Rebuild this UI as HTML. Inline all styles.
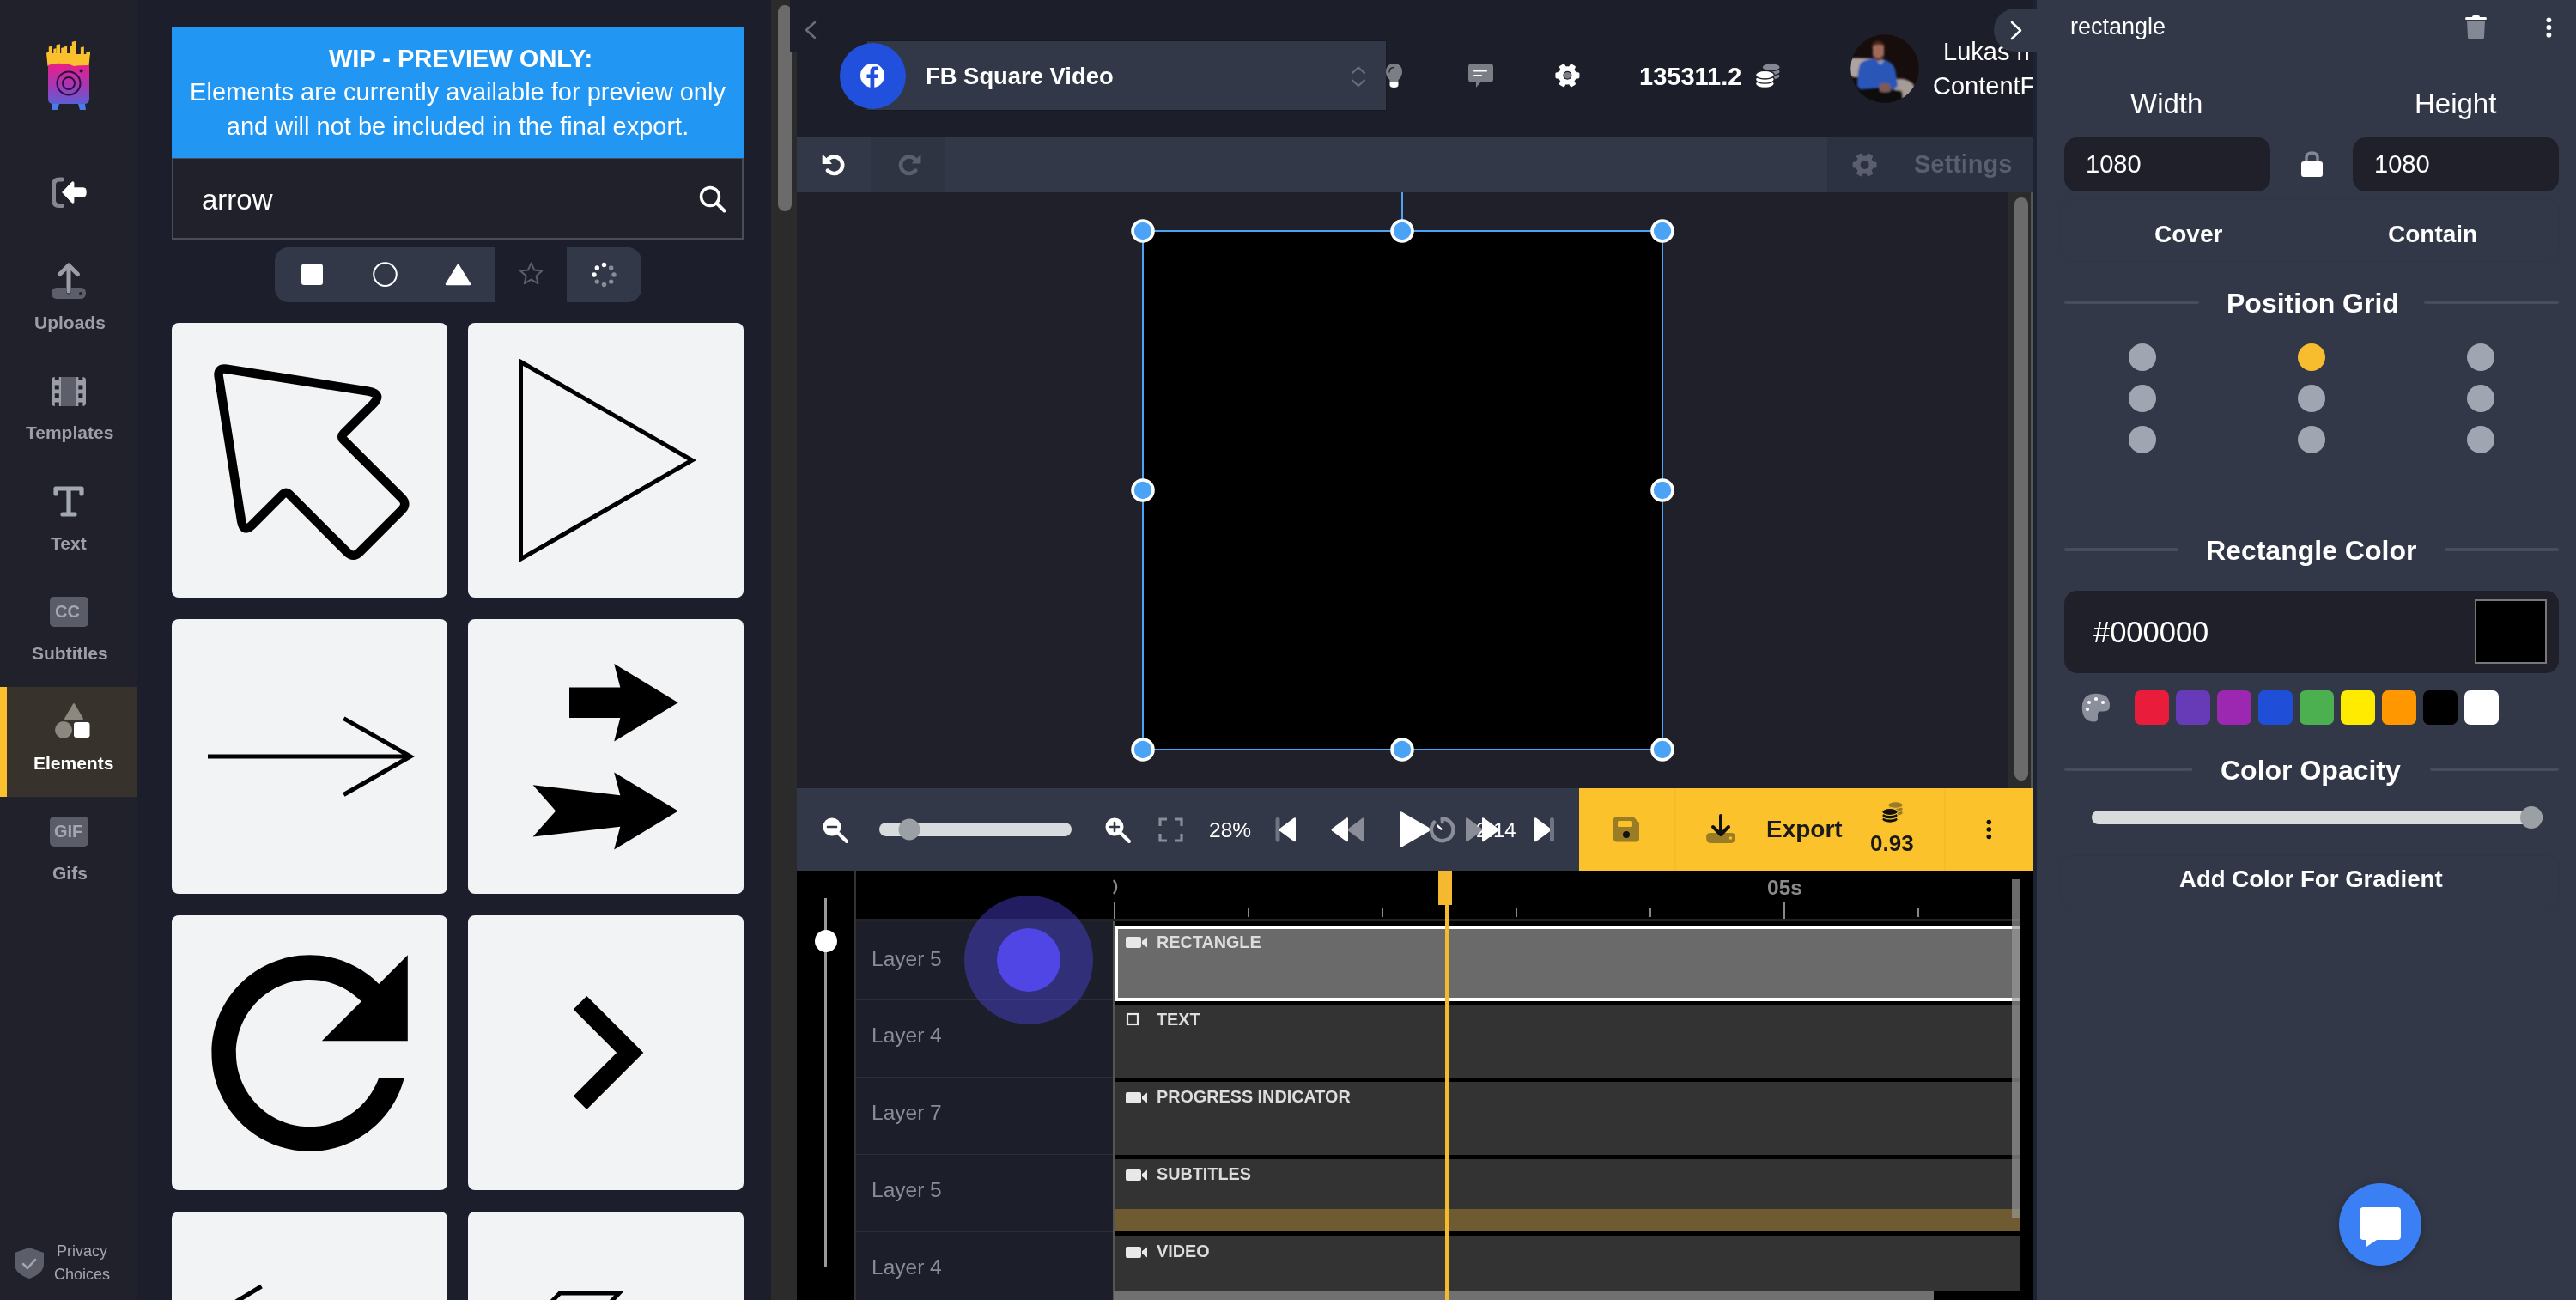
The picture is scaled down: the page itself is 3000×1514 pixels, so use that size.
<!DOCTYPE html>
<html><head><meta charset="utf-8">
<style>
*{margin:0;padding:0;box-sizing:border-box}
html,body{width:3000px;height:1514px;overflow:hidden;background:#1f2029;font-family:"Liberation Sans",sans-serif}
.a{position:absolute}
.t{position:absolute;line-height:1;white-space:nowrap;will-change:transform}
svg{position:absolute;overflow:visible}
</style></head><body>

<!-- ============ SIDEBAR ============ -->
<div class="a" style="left:0;top:0;width:160px;height:1514px;background:#20212b"></div>
<!-- logo -->
<svg style="left:0;top:0" width="160" height="140" viewBox="0 0 160 140">
  <defs><linearGradient id="lg1" x1="0" y1="0" x2="0" y2="1">
    <stop offset="0" stop-color="#ec1e86"/><stop offset="0.55" stop-color="#a537b5"/><stop offset="1" stop-color="#5c5fd6"/></linearGradient></defs>
  <g fill="#fbc02d"><path d="M54,61.5 L60,60 L60,62 L89,62 L89,63 L100.6,63 L100.6,60 L105,61 L103.5,77 L55.5,77 Z"/><path d="M56.8,54.5 L60.4,53.5 L60.4,64 L56.8,64 Z"/><path d="M62.4,57.0 L65.6,56.0 L65.6,64 L62.4,64 Z"/><path d="M65.6,52.3 L70.0,51.3 L70.0,64 L65.6,64 Z"/><path d="M71.2,56.0 L74.5,55.0 L74.5,64 L71.2,64 Z"/><path d="M74.3,54.5 L78.1,53.5 L78.1,64 L74.3,64 Z"/><path d="M81.4,54.1 L84.0,53.1 L84.0,64 L81.4,64 Z"/><path d="M83.8,48.7 L88.2,47.7 L88.2,64 L83.8,64 Z"/><path d="M93.9,55.2 L97.8,54.2 L97.8,64 L93.9,64 Z"/><path d="M100.6,60.7 L105.0,59.7 L105.0,64 L100.6,64 Z"/></g>
  <path d="M56,76 Q64,73 72,74 Q80,74 86,77 Q92,76 104,76 L104,115 Q104,121 98,121 L62,121 Q56,121 56,115 Z" fill="url(#lg1)"/>
  <path d="M60,121 L69,121 L67,128 L60,128 Z M91,121 L99,121 L100,128 L93,128 Z" fill="#4a7be6"/>
  <circle cx="80" cy="97" r="13.5" fill="none" stroke="#2a1040" stroke-width="2"/>
  <circle cx="80" cy="97" r="7" fill="none" stroke="#2a1040" stroke-width="2"/>
  <circle cx="94.6" cy="82.4" r="2" fill="#2a1040"/>
</svg>
<!-- login icon -->
<svg style="left:0;top:0" width="160" height="260">
  <path d="M72.5,209 L69,209 Q62.5,209 62.5,215.5 L62.5,233 Q62.5,239.5 69,239.5 L72.5,239.5" fill="none" stroke="#85878f" stroke-width="5" stroke-linecap="round"/>
  <path d="M72.5,224 L83.5,212.3 Q86,210.5 86,213.5 L86,218.7 L97,218.7 Q100.2,218.7 100.2,222 L100.2,225.8 Q100.2,229 97,229 L86,229 L86,234.5 Q86,237.5 83.5,235.7 Z" fill="#fff" stroke="#fff" stroke-width="0.8" stroke-linejoin="round"/>
</svg>
<!-- uploads icon -->
<svg style="left:0;top:0" width="160" height="360">
  <path d="M80,339 L80,310 M69.5,319.5 L80,309 L90.5,319.5" fill="none" stroke="#9a9ca6" stroke-width="5" stroke-linecap="round" stroke-linejoin="round"/>
  <path d="M60,341 Q60,335 66,335 L77.5,335 L77.5,340 Q77.5,342.5 80,342.5 Q82.5,342.5 82.5,340 L82.5,335 L94,335 Q100,335 100,341 Q100,348 94,348 L66,348 Q60,348 60,341 Z" fill="#5c5e6a"/>
  <circle cx="94" cy="342" r="2" fill="#20212b"/>
</svg>
<div class="t" style="left:40px;top:365px;font-size:21px;font-weight:700;color:#9d9fa8">Uploads</div>
<!-- templates icon -->
<svg style="left:0;top:0" width="160" height="480">
  <rect x="60" y="439" width="40" height="34" rx="4" fill="#9a9ca6"/>
  <rect x="71" y="439" width="18" height="34" fill="#5c5e6a"/>
  <rect x="63.8" y="439" width="5" height="4" fill="#20212b"/><rect x="63.8" y="448.5" width="5" height="5" fill="#20212b"/><rect x="63.8" y="458.3" width="5" height="5" fill="#20212b"/><rect x="63.8" y="468.5" width="5" height="4.5" fill="#20212b"/>
  <rect x="91.4" y="439" width="5" height="4" fill="#20212b"/><rect x="91.4" y="448.5" width="5" height="5" fill="#20212b"/><rect x="91.4" y="458.3" width="5" height="5" fill="#20212b"/><rect x="91.4" y="468.5" width="5" height="4.5" fill="#20212b"/>
</svg>
<div class="t" style="left:30px;top:493px;font-size:21px;font-weight:700;color:#9d9fa8">Templates</div>
<!-- text icon -->
<svg style="left:0;top:0" width="160" height="620">
  <path d="M65,575 L65,569 L95,569 L95,575 M80,569 L80,599 M73,599 L87,599" fill="none" stroke="#a3a7b2" stroke-width="5.2" stroke-linecap="round" stroke-linejoin="round"/>
</svg>
<div class="t" style="left:59px;top:622px;font-size:21px;font-weight:700;color:#9d9fa8">Text</div>
<!-- CC -->
<div class="a" style="left:57.5px;top:694.5px;width:45px;height:35px;border-radius:5px;background:#5a5c68"></div>
<div class="t" style="left:64px;top:702px;font-size:20px;font-weight:700;color:#a5a7b0">CC</div>
<div class="t" style="left:37px;top:750px;font-size:21px;font-weight:700;color:#9d9fa8">Subtitles</div>
<!-- Elements (active) -->
<div class="a" style="left:0;top:800px;width:160px;height:128px;background:#37322b"></div>
<div class="a" style="left:0;top:800px;width:8px;height:128px;background:#fbc02d"></div>
<svg style="left:0;top:0" width="160" height="900">
  <path d="M86,820 L96,837 L76,837 Z" fill="#8c8880" stroke="#8c8880" stroke-width="2" stroke-linejoin="round"/>
  <circle cx="74" cy="850" r="10" fill="#8c8880"/>
  <rect x="86" y="841" width="18.5" height="18" rx="3" fill="#fff"/>
</svg>
<div class="t" style="left:39px;top:878px;font-size:21px;font-weight:700;color:#fff">Elements</div>
<!-- GIF -->
<div class="a" style="left:57.5px;top:950.5px;width:45px;height:35px;border-radius:5px;background:#5a5c68"></div>
<div class="t" style="left:63px;top:958px;font-size:20px;font-weight:700;color:#a5a7b0">GIF</div>
<div class="t" style="left:61px;top:1006px;font-size:21px;font-weight:700;color:#9d9fa8">Gifs</div>
<!-- privacy -->
<svg style="left:0;top:0" width="160" height="1514">
  <path d="M34,1453 L51,1459 L51,1472 Q51,1483 34,1489 Q17,1483 17,1472 L17,1459 Z" fill="#5c5e6a"/>
  <path d="M27,1472 L32,1477 L41,1467" fill="none" stroke="#a5a7b0" stroke-width="2.5" stroke-linecap="round" stroke-linejoin="round"/>
</svg>
<div class="t" style="left:66px;top:1448px;font-size:18px;color:#a5a7b0">Privacy</div>
<div class="t" style="left:63px;top:1475px;font-size:18px;color:#a5a7b0">Choices</div>

<!-- ============ LEFT PANEL ============ -->
<div class="a" style="left:160px;top:0;width:738px;height:1514px;background:#1c1f2b"></div>
<div class="a" style="left:200px;top:32px;width:666px;height:152px;background:#2196f3"></div>
<div class="t" style="left:383px;top:54px;font-size:29px;font-weight:700;color:#fff">WIP - PREVIEW ONLY:</div>
<div class="t" style="left:200px;width:666px;text-align:center;top:93px;font-size:29px;color:#fff">Elements are currently available for preview only</div>
<div class="t" style="left:200px;width:666px;text-align:center;top:133px;font-size:29px;color:#fff">and will not be included in the final export.</div>
<!-- search -->
<div class="a" style="left:200px;top:184px;width:666px;height:95px;background:#20212a;border:2px solid #4a4d57;border-top-width:1px"></div>
<div class="t" style="left:235px;top:216px;font-size:33px;color:#fff">arrow</div>
<svg style="left:0;top:0" width="900" height="300">
  <circle cx="827" cy="229" r="10.5" fill="none" stroke="#fff" stroke-width="3.5"/>
  <path d="M835,237 L843.5,245.5" stroke="#fff" stroke-width="4" stroke-linecap="round"/>
</svg>
<!-- shape toolbar -->
<div class="a" style="left:320px;top:288px;width:257px;height:63.5px;background:#323847;border-radius:16px 0 0 16px"></div>
<div class="a" style="left:660px;top:288px;width:86.5px;height:63.5px;background:#323847;border-radius:0 16px 16px 0"></div>
<svg style="left:0;top:0" width="900" height="400">
  <rect x="351" y="307.5" width="25" height="24.5" rx="3" fill="#fff"/>
  <circle cx="448.5" cy="319.6" r="13.3" fill="none" stroke="#fff" stroke-width="2"/>
  <path d="M533.5,309 L547,331 L520,331 Z" fill="#fff" stroke="#fff" stroke-width="2.5" stroke-linejoin="round"/>
  <path d="M618.6,306.5 L622.3,314.6 L631.2,315.4 L624.5,321.4 L626.5,330.2 L618.6,325.6 L610.8,330.2 L612.8,321.4 L606,315.4 L614.9,314.6 Z" fill="none" stroke="#5a5e6a" stroke-width="2" stroke-linejoin="round"/>
  <circle cx="703.5" cy="308.5" r="2.7" fill="#fff"/>
  <circle cx="711.7" cy="311.9" r="2.7" fill="#8a8d97"/>
  <circle cx="715" cy="320" r="2.7" fill="#8a8d97"/>
  <circle cx="711.7" cy="328.1" r="2.7" fill="#8a8d97"/>
  <circle cx="703.5" cy="331.5" r="2.7" fill="#8a8d97"/>
  <circle cx="695.3" cy="328.1" r="2.7" fill="#8a8d97"/>
  <circle cx="692" cy="320" r="2.7" fill="#fff"/>
  <circle cx="695.3" cy="311.9" r="2.7" fill="#fff"/>
</svg>
<!-- cards -->
<div class="a" style="left:200px;top:376px;width:321px;height:320px;background:#f2f3f5;border-radius:8px"></div>
<div class="a" style="left:545px;top:376px;width:321px;height:320px;background:#f2f3f5;border-radius:8px"></div>
<div class="a" style="left:200px;top:721px;width:321px;height:320px;background:#f2f3f5;border-radius:8px"></div>
<div class="a" style="left:545px;top:721px;width:321px;height:320px;background:#f2f3f5;border-radius:8px"></div>
<div class="a" style="left:200px;top:1066px;width:321px;height:320px;background:#f2f3f5;border-radius:8px"></div>
<div class="a" style="left:545px;top:1066px;width:321px;height:320px;background:#f2f3f5;border-radius:8px"></div>
<div class="a" style="left:200px;top:1411px;width:321px;height:320px;background:#f2f3f5;border-radius:8px"></div>
<div class="a" style="left:545px;top:1411px;width:321px;height:320px;background:#f2f3f5;border-radius:8px"></div>
<svg style="left:0;top:0" width="900" height="1514">
  <path d="M263.9,429.8 L428.8,455.6 Q446.6,458.4 433.9,471.1 L399.9,505.1 Q396.4,508.6 399.9,512.2 L467.8,580.0 Q474.8,587.1 467.8,594.1 L418.6,643.3 Q411.6,650.4 404.5,643.3 L336.6,575.4 Q333.1,571.9 329.6,575.4 L294.0,611.0 Q283.4,621.6 281.1,606.8 L254.8,438.9 Q253.1,428.1 263.9,429.8 Z" fill="none" stroke="#000" stroke-width="10.5" stroke-linejoin="round"/>
  <path d="M606.5,421.5 L806,536 L606.5,651 Z" fill="none" stroke="#000" stroke-width="5"/>
  <path d="M242,881 L478,881 M400.3,836.6 L478,881 L400.3,925.5" fill="none" stroke="#000" stroke-width="5"/>
  <path d="M663,800.5 L722.3,800.5 L715.2,773 L789.8,818.3 L715.2,863.6 L722.3,836 L663,836 Z" fill="#000"/>
  <path d="M620.6,914.3 L722.3,926.3 L715.2,899.4 L789.8,944.4 L715.2,989.6 L722.3,962.7 L620.6,974.4 L647.2,944.4 Z" fill="#000"/>
  <g transform="translate(189.2,1055.2) scale(14.28)"><path d="M17.65 6.35C16.2 4.9 14.21 4 12 4c-4.42 0-7.99 3.58-7.99 8s3.57 8 7.99 8c3.730 0 6.84-2.55 7.73-6h-2.08c-.82 2.33-3.04 4-5.65 4-3.310 0-6-2.69-6-6s2.690-6 6-6c1.66 0 3.14.69 4.22 1.78L13 11h7V4l-2.35 2.35z" fill="#000"/></g>
  <g transform="translate(573.3,1094) scale(11)"><path d="M10 6L8.59 7.41 13.17 12l-4.58 4.59L10 18l6-6z" fill="#000"/></g>
  <path d="M304.5,1498 L265,1522" fill="none" stroke="#000" stroke-width="5"/>
  <path d="M600,1560 L652,1506 L721,1506 L670,1560" fill="none" stroke="#000" stroke-width="5"/>
</svg>
<!-- left panel scrollbar -->
<div class="a" style="left:898px;top:0;width:30px;height:1514px;background:#2b2b2b"></div>
<div class="a" style="left:906px;top:6px;width:16px;height:240px;background:#6b6b6b;border-radius:8px"></div>

<!-- ============ MAIN ============ -->
<div class="a" style="left:928px;top:0;width:1440px;height:160px;background:#1c1f2a"></div>
<div class="a" style="left:920px;top:0;width:8px;height:60px;background:#1c1f2a"></div>
<svg style="left:0;top:0" width="3000" height="160">
  <path d="M949,26 L939,35 L949,44" fill="none" stroke="#6b6e78" stroke-width="2.5" stroke-linecap="round" stroke-linejoin="round"/>
</svg>
<!-- FB bar -->
<div class="a" style="left:1010px;top:47px;width:605px;height:82px;background:#323847;border:1px solid #181a22;border-left:none"></div>
<div class="a" style="left:977.5px;top:49.5px;width:77px;height:77px;border-radius:50%;background:#2150dd"></div>
<svg style="left:0;top:0" width="3000" height="160">
  <circle cx="1016" cy="88" r="14" fill="#fff"/>
  <path d="M1013.5,102 L1013.5,91 L1009.5,91 L1009.5,86.5 L1013.5,86.5 L1013.5,83 Q1013.5,77.5 1019,77.5 L1022.5,77.5 L1022.5,81.5 L1020,81.5 Q1018.3,81.5 1018.3,83.3 L1018.3,86.5 L1022.5,86.5 L1021.8,91 L1018.3,91 L1018.3,102 Z" fill="#2150dd"/>
</svg>
<div class="t" style="left:1078px;top:75px;font-size:27.4px;font-weight:700;color:#fff">FB Square Video</div>
<svg style="left:0;top:0" width="3000" height="160">
  <path d="M1575,85 L1582,78.5 L1589,85 M1575,93.5 L1582,100 L1589,93.5" fill="none" stroke="#6b6e78" stroke-width="2.2" stroke-linecap="round" stroke-linejoin="round"/>
  <!-- bulb -->
  <path d="M1623.5,74 Q1633,74 1633,84 Q1633,89 1628.5,93 L1628.5,96 L1618.5,96 L1618.5,93 Q1614,89 1614,84 Q1614,74 1623.5,74 Z" fill="#7c7e86"/>
  <path d="M1618.5,96 L1628.5,96 L1628.5,99 Q1628.5,102 1623.5,102 Q1618.5,102 1618.5,99 Z" fill="#fff"/>
  <path d="M1618,84 Q1618,78.5 1623.5,78.5" fill="none" stroke="#20212b" stroke-width="1.3" stroke-linecap="round"/>
  <!-- chat -->
  <path d="M1714,74 L1735,74 Q1739,74 1739,78 L1739,92 Q1739,96 1735,96 L1724,96 L1719,102 L1719,96 L1714,96 Q1710,96 1710,92 L1710,78 Q1710,74 1714,74 Z" fill="#7c7e86"/>
  <path d="M1717,82.5 L1731,82.5 M1717,88 L1725,88" stroke="#fff" stroke-width="2.2" stroke-linecap="round"/>
  <!-- gear -->
  <g transform="translate(1825.4,87.8)"><circle r="10.6" fill="#fff"/><rect x="-3.6" y="-14" width="7.2" height="7" rx="1.6" fill="#fff" transform="rotate(90)"/><rect x="-3.6" y="-14" width="7.2" height="7" rx="1.6" fill="#fff" transform="rotate(150)"/><rect x="-3.6" y="-14" width="7.2" height="7" rx="1.6" fill="#fff" transform="rotate(210)"/><rect x="-3.6" y="-14" width="7.2" height="7" rx="1.6" fill="#fff" transform="rotate(270)"/><rect x="-3.6" y="-14" width="7.2" height="7" rx="1.6" fill="#fff" transform="rotate(330)"/><rect x="-3.6" y="-14" width="7.2" height="7" rx="1.6" fill="#fff" transform="rotate(390)"/><circle r="5" fill="#1c1f2a"/><circle r="3.8" fill="#7c7e86"/></g>
  <!-- coins -->
  <g stroke="#1c1f2a" stroke-width="1.3">
    <ellipse cx="2062.7" cy="88.6" rx="10.6" ry="4.6" fill="#848791"/>
    <ellipse cx="2062.7" cy="83.4" rx="10.6" ry="4.6" fill="#848791"/>
    <ellipse cx="2062.7" cy="78.2" rx="10.6" ry="4.6" fill="#848791"/>
    <ellipse cx="2055.4" cy="97.6" rx="10.9" ry="4.8" fill="#fff"/>
    <ellipse cx="2055.4" cy="92.4" rx="10.9" ry="4.8" fill="#fff"/>
    <ellipse cx="2055.4" cy="87.2" rx="10.9" ry="4.8" fill="#fff"/>
  </g>
</svg>
<div class="t" style="left:1909px;top:75px;font-size:29px;font-weight:700;color:#fff">135311.2</div>
<!-- avatar -->
<svg style="left:2155px;top:40px" width="80" height="80" viewBox="0 0 80 80">
  <defs><clipPath id="avc"><circle cx="40" cy="40" r="39.8"/></clipPath>
  <filter id="avb" x="-10%" y="-10%" width="120%" height="120%"><feGaussianBlur stdDeviation="0.9"/></filter></defs>
  <g clip-path="url(#avc)">
    <rect width="80" height="80" fill="#180d0d"/>
    <g filter="url(#avb)">
      <path d="M-2,30 Q0,27 6,27.5 L26,28 L22,50 L4,50 Q-2,48 -2,44 Z" fill="#ada4a1"/>
      <path d="M40,56 Q50,51 62,52 Q74,54 76,66 L74,82 L40,82 Z" fill="#a59c98"/>
      <path d="M12,33 Q18,29 27,28 L37,29 Q48,31 52,40 L55,60 L48,66 L34,64 L14,66 L8,60 Q8,40 12,33 Z" fill="#2a56b8"/>
      <path d="M30,30 L35,36 L40,30 Z" fill="#8a95b0"/>
      <path d="M26,14 Q26,10 32,9.5 Q39,10 39,15 L39,24 Q37,31 32,31 Q27,30 26,24 Z" fill="#a06a58"/>
      <path d="M25,16 Q24,8 32,7.5 Q40,8 40,15 L38,13 Q33,11 27,13 Z" fill="#4a261a"/>
      <path d="M27,24 Q32,31 38,24 L38,28 Q33,33 27,28 Z" fill="#5a3a2e"/>
      <path d="M8,64 L34,62 L48,64 L60,66 L62,82 L8,82 Z" fill="#0c0b0c"/>
      <path d="M34,58 Q40,55 46,58 L47,66 Q40,69 34,66 Z" fill="#7d5a52"/>
    </g>
  </g>
</svg>
<div class="a" style="left:2240px;top:0;width:128px;height:160px;overflow:hidden">
  <div class="t" style="left:23px;top:46px;font-size:29px;color:#fff">Lukas m</div>
  <div class="t" style="left:11px;top:86px;font-size:29px;color:#fff">ContentFries</div>
</div>
<div class="a" style="left:2322px;top:10px;width:50px;height:50px;background:#323847;border-radius:25px 0 0 25px"></div>
<svg style="left:0;top:0" width="3000" height="160">
  <path d="M2343,26 L2353,35.5 L2343,45" fill="none" stroke="#fff" stroke-width="2.6" stroke-linecap="round" stroke-linejoin="round"/>
</svg>

<!-- undo bar -->
<div class="a" style="left:928px;top:160px;width:1440px;height:64px;background:#323847"></div>
<div class="a" style="left:1014px;top:160px;width:87px;height:64px;background:#2f3443"></div>
<div class="a" style="left:2128px;top:160px;width:240px;height:64px;background:#2d3242"></div>
<svg style="left:0;top:0" width="3000" height="260">
  <path d="M964.8,185.0 A9.8,9.8 0 1 1 963.9,198.6" fill="none" stroke="#fff" stroke-width="4.6" stroke-linecap="round"/>
  <path d="M958.3,180.8 L958.3,190.5 L968,190.5 Z" fill="#fff" stroke="#fff" stroke-width="1.2" stroke-linejoin="round"/>
  <path d="M1065.4,185.0 A9.8,9.8 0 1 0 1066.3,198.6" fill="none" stroke="#5a5e6e" stroke-width="4.6" stroke-linecap="round"/>
  <path d="M1071.9,181.2 L1071.9,190 L1062.9,190 Z" fill="#5a5e6e" stroke="#5a5e6e" stroke-width="1.2" stroke-linejoin="round"/>
  <g transform="translate(2171.6,192.0)"><circle r="10.6" fill="#5a5e6e"/><rect x="-3.6" y="-14" width="7.2" height="7" rx="1.6" fill="#5a5e6e" transform="rotate(90)"/><rect x="-3.6" y="-14" width="7.2" height="7" rx="1.6" fill="#5a5e6e" transform="rotate(150)"/><rect x="-3.6" y="-14" width="7.2" height="7" rx="1.6" fill="#5a5e6e" transform="rotate(210)"/><rect x="-3.6" y="-14" width="7.2" height="7" rx="1.6" fill="#5a5e6e" transform="rotate(270)"/><rect x="-3.6" y="-14" width="7.2" height="7" rx="1.6" fill="#5a5e6e" transform="rotate(330)"/><rect x="-3.6" y="-14" width="7.2" height="7" rx="1.6" fill="#5a5e6e" transform="rotate(390)"/><circle r="5" fill="#2d3242"/><circle r="3.8" fill="#2d3242"/></g>
</svg>
<div class="t" style="left:2229px;top:177px;font-size:29px;font-weight:700;color:#5a5e6e">Settings</div>

<!-- canvas -->
<div class="a" style="left:928px;top:224px;width:1410px;height:694px;background:#1f2029"></div>
<div class="a" style="left:1632px;top:224px;width:2px;height:45px;background:#4aa3f5"></div>
<div class="a" style="left:1330px;top:268px;width:607px;height:606px;background:#000;border:2px solid #4aa3f5"></div>
<svg style="left:0;top:0" width="3000" height="1000">
  <g fill="#4aa3f5" stroke="#fff" stroke-width="3.6">
    <circle cx="1331" cy="269" r="12"/><circle cx="1633" cy="269" r="12"/><circle cx="1936" cy="269" r="12"/>
    <circle cx="1331" cy="571" r="12"/><circle cx="1936" cy="571" r="12"/>
    <circle cx="1331" cy="873" r="12"/><circle cx="1633" cy="873" r="12"/><circle cx="1936" cy="873" r="12"/>
  </g>
</svg>
<div class="a" style="left:2338px;top:224px;width:30px;height:694px;background:#2b2b2b;border-right:3px solid #555"></div>
<div class="a" style="left:2346px;top:230px;width:16px;height:679px;background:#6b6b6b;border-radius:8px"></div>

<!-- controls bar -->
<div class="a" style="left:928px;top:918px;width:911px;height:96px;background:#323847"></div>
<div class="a" style="left:1839px;top:918px;width:529px;height:96px;background:#fbc22c"></div>
<div class="a" style="left:1950px;top:918px;width:2px;height:96px;background:#f6bd28"></div>
<div class="a" style="left:2264px;top:918px;width:2px;height:96px;background:#f6bd28"></div>
<svg style="left:0;top:0" width="3000" height="1014">
  <circle cx="969" cy="963" r="10.5" fill="#fff"/>
  <path d="M977,971 L986,980" stroke="#fff" stroke-width="4" stroke-linecap="round"/>
  <path d="M964,963 L974,963" stroke="#323847" stroke-width="2.6" stroke-linecap="round"/>
  <rect x="1024" y="958" width="224" height="16" rx="8" fill="#d9dcdd"/>
  <circle cx="1059" cy="966" r="12.5" fill="#9aa0a4"/>
  <circle cx="1298" cy="963" r="10.5" fill="#fff"/>
  <path d="M1306,971 L1315,980" stroke="#fff" stroke-width="4" stroke-linecap="round"/>
  <path d="M1293,963 L1303,963 M1298,958 L1298,968" stroke="#323847" stroke-width="2.6" stroke-linecap="round"/>
  <path d="M1351,962 L1351,954 L1359,954 M1368,954 L1376,954 L1376,962 M1376,971 L1376,979 L1368,979 M1359,979 L1351,979 L1351,971" fill="none" stroke="#8a8d97" stroke-width="3.2"/>
  <rect x="1485.5" y="952" width="5" height="28.5" rx="2.5" fill="#6f7480"/>
  <path d="M1509,953.5 L1509,979 Q1509,981 1507,980 L1490,967.5 Q1489,966.3 1490,965.2 L1507,952.6 Q1509,951.5 1509,953.5 Z" fill="#fff"/>
  <path d="M1589,953.5 L1589,979 Q1589,981 1587,980 L1570,967.5 Q1569,966.3 1570,965.2 L1587,952.6 Q1589,951.5 1589,953.5 Z" fill="#8a8d97"/>
  <path d="M1570,953.5 L1570,979 Q1570,981 1568,980 L1551,967.5 Q1550,966.3 1551,965.2 L1568,952.6 Q1570,951.5 1570,953.5 Z" fill="#fff"/>
  <path d="M1630,947.5 L1630,984.5 Q1630,988 1633,986.3 L1664,968.3 Q1667,966 1664,963.7 L1633,945.7 Q1630,944 1630,947.5 Z" fill="#fff"/>
  <path d="M1679.7,953.5 A12.8,12.8 0 1 1 1670.2,957.7" fill="none" stroke="#8a8d97" stroke-width="4.4" stroke-linecap="round"/>
  <path d="M1679.7,953.5 L1679.7,957.5" stroke="#8a8d97" stroke-width="4" stroke-linecap="round"/>
  <path d="M1674.2,961.6 L1678.4,965.6" stroke="#fff" stroke-width="2.4" stroke-linecap="round"/>
  <path d="M1707,953.5 L1707,979 Q1707,981 1709,980 L1726,967.5 Q1727,966.3 1726,965.2 L1709,952.6 Q1707,951.5 1707,953.5 Z" fill="#8a8d97"/>
  <path d="M1726,953.5 L1726,979 Q1726,981 1728,980 L1745,967.5 Q1746,966.3 1745,965.2 L1728,952.6 Q1726,951.5 1726,953.5 Z" fill="#fff"/>
  <path d="M1787,953.5 L1787,979 Q1787,981 1789,980 L1806,967.5 Q1807,966.3 1806,965.2 L1789,952.6 Q1787,951.5 1787,953.5 Z" fill="#fff"/>
  <rect x="1805" y="952" width="5" height="28.5" rx="2.5" fill="#6f7480"/>
  <!-- save -->
  <path d="M1883,951 L1902,951 L1909,958 L1909,976.5 Q1909,980.5 1905,980.5 L1883,980.5 Q1879,980.5 1879,976.5 L1879,955 Q1879,951 1883,951 Z" fill="#9a7b26"/>
  <rect x="1884" y="956" width="17" height="7" rx="1.5" fill="#fbc22c"/>
  <circle cx="1894" cy="972" r="4" fill="#111"/>
  <!-- download -->
  <path d="M1987,975 Q1987,970 1992,970 L2016,970 Q2021,970 2021,975 Q2021,982 2016,982 L1992,982 Q1987,982 1987,975 Z" fill="#9a7b26"/>
  <circle cx="2015.5" cy="976" r="1.8" fill="#fbc22c"/>
  <path d="M2004,950 L2004,972 M1995,963 L2004,972 L2013,963" fill="none" stroke="#111" stroke-width="4" stroke-linecap="round" stroke-linejoin="round"/>
  <!-- coins -->
  <g stroke="#fbc22c" stroke-width="1.1">
    <ellipse cx="2207.5" cy="946.5" rx="8.8" ry="3.8" fill="#9a7b26"/>
    <ellipse cx="2207.5" cy="942" rx="8.8" ry="3.8" fill="#9a7b26"/>
    <ellipse cx="2207.5" cy="937.6" rx="8.8" ry="3.8" fill="#9a7b26"/>
    <ellipse cx="2201" cy="954.3" rx="9.2" ry="4" fill="#111"/>
    <ellipse cx="2201" cy="949.9" rx="9.2" ry="4" fill="#111"/>
    <ellipse cx="2201" cy="945.5" rx="9.2" ry="4" fill="#111"/>
  </g>
  <circle cx="2316.3" cy="957.5" r="2.8" fill="#111"/><circle cx="2316.3" cy="966" r="2.8" fill="#111"/><circle cx="2316.3" cy="974.5" r="2.8" fill="#111"/>
</svg>
<div class="t" style="left:1408px;top:955px;font-size:24.5px;color:#fff">28%</div>
<div class="t" style="left:1719px;top:955px;font-size:24px;color:#fff">2:14</div>
<div class="t" style="left:2057px;top:952px;font-size:28px;font-weight:700;color:#1a1a1a">Export</div>
<div class="t" style="left:2178px;top:969px;font-size:26px;color:#1a1a1a;font-weight:700">0.93</div>

<!-- timeline -->
<div class="a" style="left:928px;top:1014px;width:1440px;height:500px;background:#000"></div>
<div class="a" style="left:995px;top:1014px;width:2px;height:500px;background:#333"></div>
<div class="a" style="left:960px;top:1046px;width:3px;height:429px;background:#9a9a9a"></div>
<div class="a" style="left:949px;top:1083px;width:26px;height:26px;border-radius:50%;background:#fff"></div>
<div class="a" style="left:997px;top:1070px;width:1356px;height:3px;background:#222"></div>
<!-- label column -->
<div class="a" style="left:997px;top:1073px;width:299px;height:441px;background:#1c1f2a"></div>
<div class="a" style="left:997px;top:1164px;width:299px;height:1px;background:#2c2f3b"></div>
<div class="a" style="left:997px;top:1254px;width:299px;height:1px;background:#2c2f3b"></div>
<div class="a" style="left:997px;top:1344px;width:299px;height:1px;background:#2c2f3b"></div>
<div class="a" style="left:997px;top:1434px;width:299px;height:1px;background:#2c2f3b"></div>
<div class="t" style="left:1015px;top:1105px;font-size:24.5px;color:#8a8c94">Layer 5</div>
<div class="t" style="left:1015px;top:1194px;font-size:24.5px;color:#8a8c94">Layer 4</div>
<div class="t" style="left:1015px;top:1284px;font-size:24.5px;color:#8a8c94">Layer 7</div>
<div class="t" style="left:1015px;top:1374px;font-size:24.5px;color:#8a8c94">Layer 5</div>
<div class="t" style="left:1015px;top:1464px;font-size:24.5px;color:#8a8c94">Layer 4</div>
<!-- clips -->
<div class="a" style="left:1296px;top:1073px;width:2px;height:441px;background:#555"></div>
<div class="a" style="left:1298px;top:1078px;width:1055px;height:88px;background:#6a6a6a;border-top:4.5px solid #fff;border-bottom:4.5px solid #fff;border-left:4px solid #fff"></div>
<div class="a" style="left:1298px;top:1170px;width:1055px;height:85px;background:#333"></div>
<div class="a" style="left:1298px;top:1260px;width:1055px;height:85px;background:#333"></div>
<div class="a" style="left:1298px;top:1350px;width:1055px;height:58px;background:#333"></div>
<div class="a" style="left:1298px;top:1408px;width:1055px;height:26px;background:#6e5b31"></div>
<div class="a" style="left:1298px;top:1440px;width:1055px;height:64px;background:#333"></div>
<div class="a" style="left:1297px;top:1504px;width:955px;height:10px;background:#707070"></div>
<svg style="left:0;top:0" width="3000" height="1514">
  <g fill="#e8e8e8">
    <path d="M1313,1091 L1327,1091 Q1329,1091 1329,1093 L1329,1102 Q1329,1104 1327,1104 L1313,1104 Q1311,1104 1311,1102 L1311,1093 Q1311,1091 1313,1091 Z M1330,1096 L1336,1091.5 L1336,1103.5 L1330,1099 Z"/>
    <path d="M1313,1272 L1327,1272 Q1329,1272 1329,1274 L1329,1283 Q1329,1285 1327,1285 L1313,1285 Q1311,1285 1311,1283 L1311,1274 Q1311,1272 1313,1272 Z M1330,1277 L1336,1272.5 L1336,1284.5 L1330,1280 Z"/>
    <path d="M1313,1362 L1327,1362 Q1329,1362 1329,1364 L1329,1373 Q1329,1375 1327,1375 L1313,1375 Q1311,1375 1311,1373 L1311,1364 Q1311,1362 1313,1362 Z M1330,1367 L1336,1362.5 L1336,1374.5 L1330,1370 Z"/>
    <path d="M1313,1452 L1327,1452 Q1329,1452 1329,1454 L1329,1463 Q1329,1465 1327,1465 L1313,1465 Q1311,1465 1311,1463 L1311,1454 Q1311,1452 1313,1452 Z M1330,1457 L1336,1452.5 L1336,1464.5 L1330,1460 Z"/>
  </g>
  <rect x="1313" y="1181" width="12" height="12" fill="none" stroke="#e8e8e8" stroke-width="2.2"/>
  <g fill="#888">
    <rect x="1297" y="1050" width="2" height="20"/><rect x="2077" y="1050" width="2" height="20"/>
    <rect x="1453" y="1057" width="2" height="11"/><rect x="1609" y="1057" width="2" height="11"/><rect x="1765" y="1057" width="2" height="11"/>
    <rect x="1921" y="1057" width="2" height="11"/><rect x="2233" y="1057" width="2" height="11"/>
  </g>
  <path d="M1297,1025 Q1303,1033 1297,1041" fill="none" stroke="#888" stroke-width="2.5"/>
</svg>
<div class="t" style="left:1347px;top:1088px;font-size:19.8px;font-weight:700;color:#ddd">RECTANGLE</div>
<div class="t" style="left:1347px;top:1178px;font-size:19.8px;font-weight:700;color:#ddd">TEXT</div>
<div class="t" style="left:1347px;top:1268px;font-size:19.8px;font-weight:700;color:#ddd">PROGRESS INDICATOR</div>
<div class="t" style="left:1347px;top:1358px;font-size:19.8px;font-weight:700;color:#ddd">SUBTITLES</div>
<div class="t" style="left:1347px;top:1448px;font-size:19.8px;font-weight:700;color:#ddd">VIDEO</div>
<div class="t" style="left:2058px;top:1022px;font-size:24.5px;font-weight:700;color:#8a8a8a">05s</div>
<!-- touch indicator -->
<div class="a" style="left:1123px;top:1043px;width:150px;height:150px;border-radius:50%;background:rgba(80,70,230,0.42)"></div>
<div class="a" style="left:1161px;top:1081px;width:74px;height:74px;border-radius:50%;background:#5046e5"></div>
<!-- playhead -->
<div class="a" style="left:1675px;top:1014px;width:16px;height:40px;background:#f4b92e"></div>
<div class="a" style="left:1683px;top:1054px;width:4px;height:460px;background:#f4b92e"></div>
<!-- timeline scrollbar -->
<div class="a" style="left:2343px;top:1024px;width:10px;height:395px;background:rgba(152,152,152,0.7)"></div>
<div class="a" style="left:2368px;top:0;width:4px;height:10px;background:#1e2333"></div>
<div class="a" style="left:2368px;top:60px;width:4px;height:1454px;background:#1e2333"></div>

<!-- ============ RIGHT PANEL ============ -->
<div class="a" style="left:2372px;top:0;width:628px;height:1514px;background:#323848"></div>
<div class="t" style="left:2411px;top:18px;font-size:27px;color:#fff">rectangle</div>
<svg style="left:0;top:0" width="3000" height="1514">
  <path d="M2879,20 Q2879,18 2881,18 L2886,18 Q2888,18 2888,20 L2894.5,20 Q2896,20 2896,21.5 Q2896,23 2894.5,23 L2872.5,23 Q2871,23 2871,21.5 Q2871,20 2872.5,20 Z" fill="#fff"/>
  <path d="M2873,24 L2894,24 L2893,43 Q2893,46 2890,46 L2877,46 Q2874,46 2874,43 Z" fill="#848894"/>
  <circle cx="2968.4" cy="23.3" r="2.9" fill="#fff"/><circle cx="2968.4" cy="32" r="2.9" fill="#fff"/><circle cx="2968.4" cy="40.7" r="2.9" fill="#fff"/>
  <path d="M2686,189 L2686,184 Q2686,178 2692.5,178 Q2699,178 2699,184 L2699,189" fill="none" stroke="#848894" stroke-width="3.5"/>
  <rect x="2680" y="188" width="25" height="18" rx="3" fill="#fff"/>
  <rect x="2404" y="350" width="157" height="4" rx="2" fill="#474d5c"/><rect x="2823" y="350" width="157" height="4" rx="2" fill="#474d5c"/>
  <g fill="#a0a5b2">
    <circle cx="2495" cy="416" r="16"/><circle cx="2889" cy="416" r="16"/>
    <circle cx="2495" cy="464" r="16"/><circle cx="2692" cy="464" r="16"/><circle cx="2889" cy="464" r="16"/>
    <circle cx="2495" cy="512" r="16"/><circle cx="2692" cy="512" r="16"/><circle cx="2889" cy="512" r="16"/>
  </g>
  <circle cx="2692" cy="416" r="16" fill="#f8bd2f"/>
  <rect x="2404" y="638" width="132.5" height="4" rx="2" fill="#474d5c"/><rect x="2847" y="638" width="133" height="4" rx="2" fill="#474d5c"/>
  <rect x="2404" y="894" width="149.5" height="4" rx="2" fill="#474d5c"/><rect x="2830" y="894" width="150" height="4" rx="2" fill="#474d5c"/>
  <path d="M2441,807.8 Q2457,807.8 2457,822 Q2457,828.5 2450,828.5 L2446,828.5 Q2443,828.5 2443,832 L2443,836 Q2443,840.5 2439,840.5 Q2424.8,840.5 2424.8,824 Q2424.8,807.8 2441,807.8 Z" fill="#8a8f9b"/>
  <g fill="#fff"><circle cx="2433" cy="818" r="2.1"/><circle cx="2441" cy="814" r="2.1"/><circle cx="2449" cy="818" r="2.1"/><circle cx="2431" cy="826" r="2.1"/></g>
  <rect x="2486" y="804" width="40" height="40" rx="7" fill="#ea1c3b"/>
  <rect x="2534" y="804" width="40" height="40" rx="7" fill="#673ab7"/>
  <rect x="2582" y="804" width="40" height="40" rx="7" fill="#9c27b0"/>
  <rect x="2630" y="804" width="40" height="40" rx="7" fill="#1f4fd8"/>
  <rect x="2678" y="804" width="40" height="40" rx="7" fill="#4caf50"/>
  <rect x="2726" y="804" width="40" height="40" rx="7" fill="#ffeb00"/>
  <rect x="2774" y="804" width="40" height="40" rx="7" fill="#ff9800"/>
  <rect x="2822" y="804" width="40" height="40" rx="7" fill="#000"/>
  <rect x="2870" y="804" width="40" height="40" rx="7" fill="#fff"/>
  <rect x="2436" y="944" width="525" height="16" rx="8" fill="#d9dcdd"/>
  <circle cx="2948" cy="952" r="13" fill="#9aa0a4"/>
</svg>
<div class="t" style="left:2481px;top:104px;font-size:33px;color:#fff">Width</div>
<div class="t" style="left:2812px;top:104px;font-size:33px;color:#fff">Height</div>
<div class="a" style="left:2404px;top:160px;width:239.5px;height:63px;background:#1f2029;border-radius:15px"></div>
<div class="a" style="left:2740px;top:160px;width:240px;height:63px;background:#1f2029;border-radius:15px"></div>
<div class="t" style="left:2429px;top:177px;font-size:29px;color:#fff">1080</div>
<div class="t" style="left:2765px;top:177px;font-size:29px;color:#fff">1080</div>
<div class="a" style="left:2400px;top:232px;width:580px;height:72px;border-radius:16px;box-shadow:0 0 3px rgba(0,0,0,0.08)"></div>
<div class="t" style="left:2509px;top:259px;font-size:28px;font-weight:700;color:#fff">Cover</div>
<div class="t" style="left:2781px;top:259px;font-size:28px;font-weight:700;color:#fff">Contain</div>
<div class="t" style="left:2593px;top:337px;font-size:32px;font-weight:700;color:#fff">Position Grid</div>
<div class="t" style="left:2569px;top:625px;font-size:32px;font-weight:700;color:#fff">Rectangle Color</div>
<div class="a" style="left:2404px;top:688px;width:576px;height:96px;background:#1f2029;border-radius:15px"></div>
<div class="t" style="left:2438px;top:719px;font-size:34.5px;color:#fff">#000000</div>
<div class="a" style="left:2882px;top:698px;width:84px;height:75px;background:#000;border:2px solid #777"></div>
<div class="t" style="left:2586px;top:881px;font-size:32px;font-weight:700;color:#fff">Color Opacity</div>
<div class="a" style="left:2400px;top:997px;width:580px;height:60px;border-radius:16px;box-shadow:0 0 3px rgba(0,0,0,0.08)"></div>
<div class="t" style="left:2538px;top:1010px;font-size:27.6px;font-weight:700;color:#fff">Add Color For Gradient</div>
<!-- chat bubble -->
<div class="a" style="left:2724px;top:1378px;width:96px;height:96px;border-radius:50%;background:#3b7ff5;box-shadow:0 2px 12px rgba(0,0,0,0.25)"></div>
<svg style="left:0;top:0" width="3000" height="1514">
  <path d="M2752.5,1406 L2792,1406 Q2796,1406 2796,1410 L2796,1440 Q2796,1444 2792,1444 L2768,1444 L2756,1452 L2756,1444 L2752.5,1444 Q2748.5,1444 2748.5,1440 L2748.5,1410 Q2748.5,1406 2752.5,1406 Z" fill="#fff"/>
</svg>

</body></html>
